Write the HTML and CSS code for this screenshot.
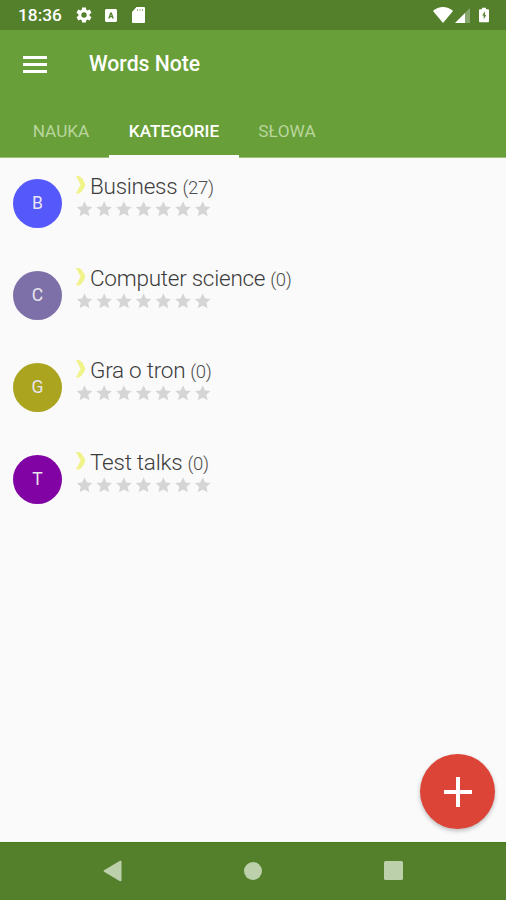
FILE: index.html
```html
<!DOCTYPE html>
<html lang="pl">
<head>
    <meta charset="UTF-8">
    <meta name="viewport" content="width=device-width, initial-scale=1.0">
    <title>Words Note</title>
    <link rel="stylesheet" href="styles.css">
</head>
<body>
    <!-- Shared icons -->
    <svg class="icon-defs" width="0" height="0">
        <symbol id="stars" viewBox="0 0 138 20">
            <g id="star-pair">
                <path id="star" d="M8.500 1.200l2.400 5.200 5.400.5-4.100 3.800 1.200 5.600-4.900-2.900-4.900 2.900 1.200-5.600L.7 6.900l5.400-.5z"/>
                <use href="#star" x="19.700"/>
            </g>
            <use href="#star-pair" x="39.400"/>
            <use href="#star-pair" x="78.800"/>
            <use href="#star" x="118.200"/>
        </symbol>
        <symbol id="chevron" viewBox="0 0 10 18">
            <path d="M0 0h3q3.500 1 6.500 8.700Q6.500 16 3 17.500H0L4.500 8.700z"/>
        </symbol>
    </svg>

    <!-- Status Bar -->
    <div class="status-bar">
        <span class="clock">18:36</span>
        <svg class="gear" width="18" height="18" viewBox="0 0 24 24"><path d="M19.400 13a7.500 7.500 0 0 0 0-2l2.600-1.900-2.500-4.300-2.900 1.200a8 8 0 0 0-1.600-1L14.600 2H9.400L9 5a8 8 0 0 0-1.600 1L4.500 4.800 2 9.100 4.600 11a7.500 7.500 0 0 0 0 2L2 14.900l2.500 4.300L7.400 18a8 8 0 0 0 1.600 1l.4 3h5.200l.4-3a8 8 0 0 0 1.600-1l2.900 1.200 2.500-4.300zM12 15.600a3.600 3.600 0 1 1 0-7.200 3.600 3.600 0 0 1 0 7.200z"/></svg>
        <svg class="keyboard" width="12" height="13" viewBox="0 0 12 13"><path fill-rule="evenodd" d="M1 0h10l1 1v11l-1 1H1l-1-1V1zM5.200 3.500L3.200 9.500h1.500l.4-1.200h1.800l.4 1.200h1.500L6.800 3.500zM6 5.300l.5 1.800h-1z"/></svg>
        <svg class="sd-card" width="13" height="16" viewBox="0 0 13 16"><path d="M4.500 0H12q1 0 1 1v14q0 1-1 1H1q-1 0-1-1V5z"/><path class="notch" d="M5 2h1v2H5zM7.500 2h1v2h-1zM10 2h1v2h-1z"/></svg>
        <div class="status-right">
            <svg width="20" height="16" viewBox="0 0 20 16"><path d="M0 4Q4.500 0 10 0t10 4L10 16z"/></svg>
            <svg class="signal" width="15" height="15" viewBox="0 0 15 15"><path d="M0 15L10 5V15z"/><path class="faded" d="M10 5L15 0v15H10z"/></svg>
            <svg class="battery" width="10" height="16" viewBox="0 0 11 16"><path fill-rule="evenodd" d="M3.300 0h4.400v1.600H10q1 0 1 1V15q0 1-1 1H1q-1 0-1-1V2.600q0-1 1-1h2.300zM6.500 4L3.500 8.500h1.700v4.300L8 8.100H6.500z"/></svg>
        </div>
    </div>

    <!-- App Bar -->
    <header class="app-bar">
        <div class="toolbar">
            <svg class="menu" width="24" height="17" viewBox="0 0 24 17"><path d="M0 0h24v3H0zM0 7h24v3H0zM0 14h24v3H0z"/></svg>
            <h1 class="title">Words Note</h1>
        </div>
        <nav class="tabs">
            <a class="tab tab-nauka">NAUKA</a>
            <a class="tab active">KATEGORIE</a>
            <a class="tab tab-slowa">SŁOWA</a>
        </nav>
    </header>

    <!-- Category List -->
    <main class="list">
        <div class="category">
            <div class="avatar blue">B</div>
            <div class="details">
                <div class="name-line">
                    <svg class="chevron"><use href="#chevron"/></svg>
                    <span class="name">Business</span>
                    <span class="count">(27)</span>
                </div>
                <svg class="stars"><use href="#stars"/></svg>
            </div>
        </div>
        <div class="category">
            <div class="avatar violet">C</div>
            <div class="details">
                <div class="name-line">
                    <svg class="chevron"><use href="#chevron"/></svg>
                    <span class="name">Computer science</span>
                    <span class="count">(0)</span>
                </div>
                <svg class="stars"><use href="#stars"/></svg>
            </div>
        </div>
        <div class="category">
            <div class="avatar olive">G</div>
            <div class="details">
                <div class="name-line">
                    <svg class="chevron"><use href="#chevron"/></svg>
                    <span class="name">Gra o tron</span>
                    <span class="count">(0)</span>
                </div>
                <svg class="stars"><use href="#stars"/></svg>
            </div>
        </div>
        <div class="category">
            <div class="avatar purple">T</div>
            <div class="details">
                <div class="name-line">
                    <svg class="chevron"><use href="#chevron"/></svg>
                    <span class="name">Test talks</span>
                    <span class="count">(0)</span>
                </div>
                <svg class="stars"><use href="#stars"/></svg>
            </div>
        </div>

        <!-- Add Button -->
        <button class="add-button" aria-label="Dodaj">
            <svg width="28" height="30" viewBox="0 0 28 30"><path d="M12 0h4v13h12v4H16v13h-4V17H0v-4h12z"/></svg>
        </button>
    </main>

    <!-- Navigation Bar -->
    <div class="nav-bar">
        <svg width="19" height="22" viewBox="0 0 19 22"><path d="M1 10.200L17 .8q1.500-.6 1.500 1v18.400q0 1.600-1.500 1L1 11.800q-1-.8 0-1.600z"/></svg>
        <svg width="18" height="18" viewBox="0 0 18 18"><circle cx="9" cy="9" r="9"/></svg>
        <svg width="19" height="19" viewBox="0 0 19 19"><rect width="19" height="19" rx="1.500"/></svg>
    </div>
</body>
</html>
```

FILE: styles.css
```css
* {
    margin: 0;
    padding: 0;
    box-sizing: border-box;
}

body {
    height: 900px;
    display: flex;
    flex-direction: column;
    overflow: hidden;
    background-color: #fafafa;
    font-family: Roboto, "Liberation Sans", sans-serif;
}

svg {
    display: block;
    flex-shrink: 0;
    fill: currentColor;
}

.icon-defs {
    position: absolute;
}

/* Status Bar */
.status-bar {
    height: 30px;
    padding: 0 17px 0 18px;
    display: flex;
    align-items: center;
    background-color: #54802c;
    color: #ffffff;
}

.clock {
    width: 57px;
    font-size: 17.3px;
    font-weight: 500;
}

.keyboard {
    margin-left: 12px;
}

.sd-card {
    margin-left: 15px;
}

.notch {
    fill: #9ab582;
}

.status-right {
    margin-left: auto;
    display: flex;
    align-items: center;
}

.signal {
    margin-left: 2px;
}

.faded {
    opacity: 0.3;
}

.battery {
    margin-left: 9px;
}

/* App Bar */
.app-bar {
    height: 128px;
    display: flex;
    flex-direction: column;
    justify-content: space-between;
    background-color: #689f38;
    border-bottom: 1px solid #9dbf80;
    color: #ffffff;
}

.toolbar {
    height: 68px;
    padding-left: 23px;
    display: flex;
    align-items: center;
}

.title {
    margin-left: 42px;
    font-size: 21.2px;
    font-weight: 500;
    line-height: 26px;
}

.tabs {
    height: 52px;
    padding-left: 13px;
    display: flex;
}

.tab {
    height: 53px;
    line-height: 52px;
    text-align: center;
    font-size: 17.2px;
    color: #b9d69d;
}

.tab-nauka {
    width: 96px;
}

.tab-slowa {
    width: 96px;
}

.tab.active {
    width: 130px;
    border-bottom: 3px solid #fafafa;
    font-weight: 500;
    color: #ffffff;
}

/* Category List */
.list {
    flex-grow: 1;
    position: relative;
}

.category {
    height: 92px;
    padding: 21px 0 0 13px;
    display: flex;
    align-items: flex-start;
}

.avatar {
    width: 49px;
    height: 49px;
    border-radius: 50%;
    line-height: 48px;
    text-align: center;
    font-size: 17.5px;
    color: #e9e5ee;
}

.blue {
    background-color: #5558fb;
}

.violet {
    background-color: #7d70a8;
}

.olive {
    background-color: #aaa41e;
}

.purple {
    background-color: #8203a3;
}

.details {
    margin: -6px 0 0 14px;
}

.name-line {
    height: 27px;
    display: flex;
    align-items: baseline;
    line-height: 27px;
    font-weight: 300;
}

.chevron {
    width: 10px;
    height: 18px;
    margin-right: 4px;
    align-self: flex-start;
    margin-top: 3px;
    color: #f0f28a;
}

.name {
    font-size: 22.5px;
    letter-spacing: -0.25px;
    color: #3c3c3c;
}

.count {
    margin-left: 5px;
    font-size: 18.5px;
    letter-spacing: -0.3px;
    color: #505050;
}

.stars {
    width: 138px;
    height: 20px;
    color: #d5d5d5;
}

/* Add Button */
.add-button {
    width: 75px;
    height: 75px;
    position: absolute;
    right: 11px;
    bottom: 13px;
    display: flex;
    align-items: center;
    justify-content: center;
    border: none;
    border-radius: 50%;
    background-color: #db4437;
    box-shadow: 0 2px 4px rgba(0, 0, 0, 0.25);
    color: #ffffff;
}

/* Navigation Bar */
.nav-bar {
    height: 58px;
    padding: 0 103px 2px;
    display: flex;
    align-items: center;
    justify-content: space-between;
    background-color: #54802c;
    border-top: 1px solid #4a7a1e;
    color: #bbd0ab;
}
```
